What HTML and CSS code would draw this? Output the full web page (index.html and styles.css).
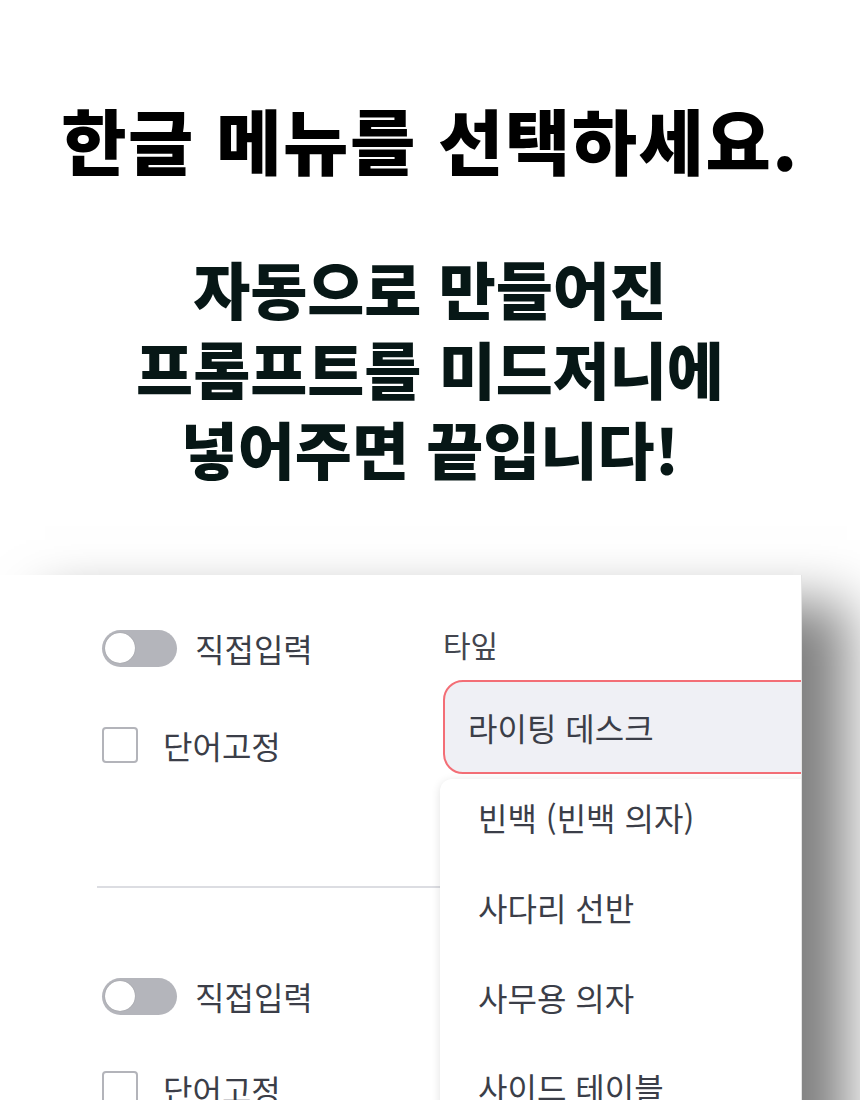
FILE: index.html
```html
<!DOCTYPE html>
<html lang="ko">
<head>
  <meta charset="UTF-8">
  <title>한글 메뉴를 선택하세요</title>
  <meta name="viewport" content="width=device-width, initial-scale=1.0">
  <link rel="stylesheet" href="styles.css">
</head>
<body>
  <header class="intro">
    <h1>한글 메뉴를 선택하세요.</h1>
    <p class="lead">자동으로 만들어진<br>프롬프트를 미드저니에<br>넣어주면 끝입니다!</p>
  </header>

  <section class="shot">
    <div class="side">
      <div class="group">
        <div class="row">
          <span class="switch"><span class="knob"></span></span>
          <span class="switch-label">직접입력</span>
        </div>
        <div class="row">
          <span class="check"></span>
          <span class="check-label">단어고정</span>
        </div>
      </div>
      <hr class="divider">
      <div class="group group-second">
        <div class="row">
          <span class="switch"><span class="knob"></span></span>
          <span class="switch-label">직접입력</span>
        </div>
        <div class="row">
          <span class="check"></span>
          <span class="check-label">단어고정</span>
        </div>
      </div>
    </div>

    <div class="field">
      <label class="field-label">타잎</label>
      <div class="select">라이팅 데스크</div>
      <ul class="options">
        <li>빈백 (빈백 의자)</li>
        <li>사다리 선반</li>
        <li>사무용 의자</li>
        <li>사이드 테이블</li>
      </ul>
    </div>
  </section>
</body>
</html>
```

FILE: styles.css
```css
body {
  margin: 0;
  background-color: #ffffff;
  font-family: "Noto Sans CJK KR", "Noto Sans", sans-serif;
  overflow: hidden;
}
.intro {
  text-align: center;
  padding-top: 96px;
}
h1 {
  margin: 0;
  font-size: 71px;
  line-height: 84px;
  font-weight: 900;
  color: #000000;
  letter-spacing: 1.5px;
}
.lead {
  margin: 68px 0 0;
  font-size: 62px;
  line-height: 80px;
  font-weight: 900;
  color: #071716;
}
.shot {
  margin-top: 87px;
  width: 801px;
  height: 560px;
  display: flex;
  background-color: #ffffff;
  border-right: 1px solid #e4e4e4;
  overflow: hidden;
  box-shadow: 45px 28px 52px rgba(0, 0, 0, 0.5);
}
.side {
  width: 343px;
  margin-left: 97px;
  flex-shrink: 0;
}
.group {
  padding: 53px 0 0 5px;
  display: flex;
  flex-direction: column;
  gap: 57px;
}
.group-second {
  padding-top: 88px;
  gap: 53px;
}
.row {
  height: 40px;
  display: flex;
  align-items: center;
  font-size: 32px;
  color: #3b3e48;
}
.switch {
  width: 75px;
  height: 37px;
  border-radius: 19px;
  background-color: #b4b5bb;
  display: flex;
  align-items: center;
  padding-left: 3px;
  box-sizing: border-box;
}
.knob {
  width: 30px;
  height: 30px;
  border-radius: 50%;
  background-color: #ffffff;
  box-shadow: 0 0 1px rgba(0, 0, 0, 0.3);
}
.switch-label {
  margin-left: 18px;
}
.check {
  width: 36px;
  height: 36px;
  box-sizing: border-box;
  border: 2px solid #b3b4ba;
  border-radius: 4px;
  background-color: #ffffff;
}
.check-label {
  margin-left: 25px;
}
.divider {
  margin: 121px 0 0;
  border: none;
  height: 2px;
  width: 420px;
  background-color: #dcdde2;
}
.field {
  width: 420px;
  flex-shrink: 0;
  position: relative;
  z-index: 1;
}
.field-label {
  display: block;
  margin: 49px 0 0 3px;
  font-size: 30px;
  line-height: 40px;
  color: #43464f;
}
.select {
  margin: 16px 0 0 3px;
  height: 94px;
  box-sizing: border-box;
  border: 2px solid #f36e76;
  border-radius: 20px;
  background-color: #eff0f5;
  padding-left: 23px;
  display: flex;
  align-items: center;
  font-size: 32px;
  color: #3b3e48;
}
.options {
  list-style: none;
  margin: 5px 0 0;
  padding: 0;
  background-color: #ffffff;
  border-top-left-radius: 12px;
  box-shadow: 0 2px 10px rgba(0, 0, 0, 0.12);
}
.options li {
  height: 76px;
  line-height: 76px;
  padding: 0 0 14px 38px;
  font-size: 32px;
  color: #3b3e48;
}
```
